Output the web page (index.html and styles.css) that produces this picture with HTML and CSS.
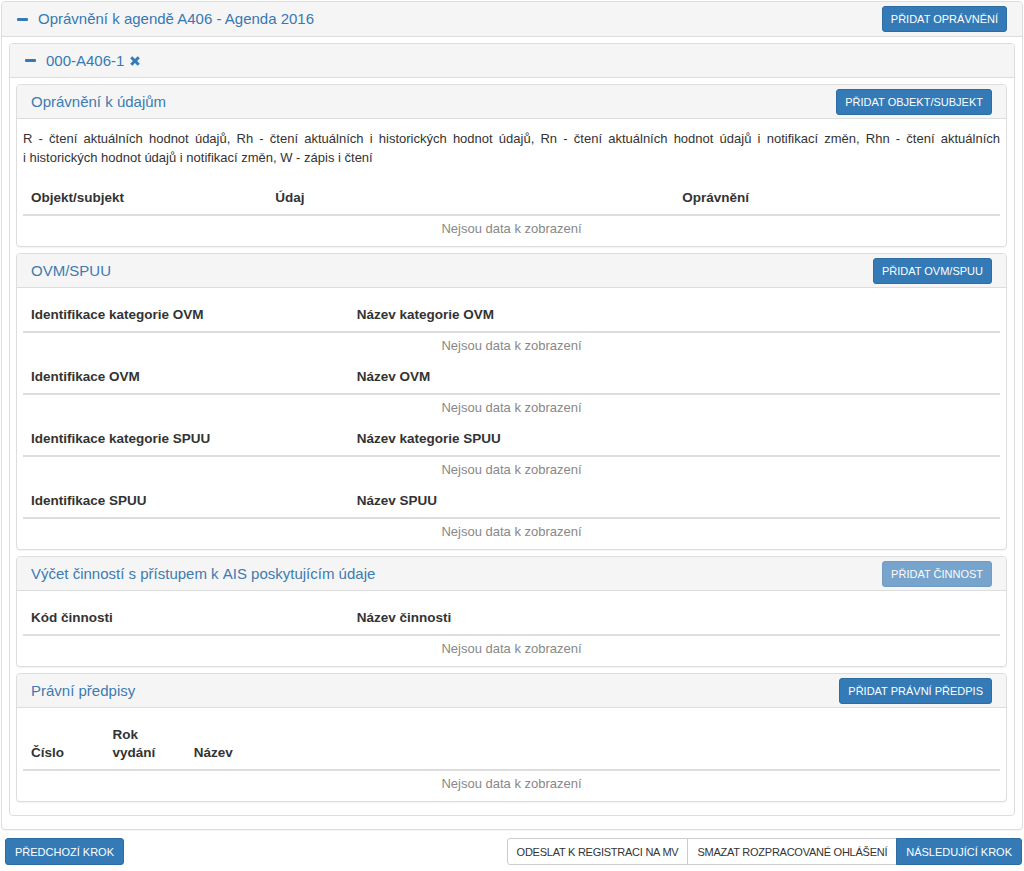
FILE: index.html
```html
<!DOCTYPE html>
<html lang="cs">
<head>
<meta charset="utf-8">
<title>Oprávnění k agendě</title>
<link rel="stylesheet" href="styles.css">
</head>
<body>
<div class="page">
  <section class="panel panel-outer">
    <header class="panel-heading heading-outer">
      <h2 class="panel-title"><span class="ico-minus"></span>Oprávnění k agendě A406 - Agenda 2016</h2>
      <button class="btn btn-primary">Přidat oprávnění</button>
    </header>
    <div class="panel-body body-outer">
      <section class="panel panel-inner">
        <header class="panel-heading heading-inner">
          <h3 class="panel-title"><span class="ico-minus"></span>000-A406-1<svg class="ico-remove" viewBox="0 0 12 12" aria-hidden="true"><path d="M1.2 3.3 L3.3 1.2 L6 3.9 L8.7 1.2 L10.8 3.3 L8.1 6 L10.8 8.7 L8.7 10.8 L6 8.1 L3.3 10.8 L1.2 8.7 L3.9 6 Z"/></svg></h3>
        </header>
        <div class="panel-body body-inner">

          <section class="panel sub">
            <header class="panel-heading heading-sub">
              <h4 class="panel-title sub-title">Oprávnění k&nbsp;údajům</h4>
              <button class="btn btn-primary">Přidat objekt/subjekt</button>
            </header>
            <div class="sub-body">
              <p class="note">R - čtení aktuálních hodnot údajů, Rh - čtení aktuálních i&nbsp;historických hodnot údajů, Rn - čtení aktuálních hodnot údajů i&nbsp;notifikací změn, Rhn - čtení aktuálních i&nbsp;historických hodnot údajů i&nbsp;notifikací změn, W - zápis i&nbsp;čtení</p>
              <table class="grid">
                <thead><tr><th class="w-3">Objekt/subjekt</th><th class="w-5">Údaj</th><th class="w-4">Oprávnění</th></tr></thead>
                <tbody><tr><td class="empty" colspan="3">Nejsou data k zobrazení</td></tr></tbody>
              </table>
            </div>
          </section>

          <section class="panel sub">
            <header class="panel-heading heading-sub">
              <h4 class="panel-title sub-title">OVM/SPUU</h4>
              <button class="btn btn-primary">Přidat OVM/SPUU</button>
            </header>
            <div class="sub-body">
              <table class="grid">
                <thead><tr><th class="w-4">Identifikace kategorie OVM</th><th class="w-8">Název kategorie OVM</th></tr></thead>
                <tbody><tr><td class="empty" colspan="2">Nejsou data k zobrazení</td></tr></tbody>
              </table>
              <table class="grid">
                <thead><tr><th class="w-4">Identifikace OVM</th><th class="w-8">Název OVM</th></tr></thead>
                <tbody><tr><td class="empty" colspan="2">Nejsou data k zobrazení</td></tr></tbody>
              </table>
              <table class="grid">
                <thead><tr><th class="w-4">Identifikace kategorie SPUU</th><th class="w-8">Název kategorie SPUU</th></tr></thead>
                <tbody><tr><td class="empty" colspan="2">Nejsou data k zobrazení</td></tr></tbody>
              </table>
              <table class="grid">
                <thead><tr><th class="w-4">Identifikace SPUU</th><th class="w-8">Název SPUU</th></tr></thead>
                <tbody><tr><td class="empty" colspan="2">Nejsou data k zobrazení</td></tr></tbody>
              </table>
            </div>
          </section>

          <section class="panel sub">
            <header class="panel-heading heading-sub">
              <h4 class="panel-title sub-title">Výčet činností s&nbsp;přístupem k&nbsp;AIS poskytujícím údaje</h4>
              <button class="btn btn-primary" disabled>Přidat činnost</button>
            </header>
            <div class="sub-body">
              <table class="grid">
                <thead><tr><th class="w-4">Kód činnosti</th><th class="w-8">Název činnosti</th></tr></thead>
                <tbody><tr><td class="empty" colspan="2">Nejsou data k zobrazení</td></tr></tbody>
              </table>
            </div>
          </section>

          <section class="panel sub">
            <header class="panel-heading heading-sub">
              <h4 class="panel-title sub-title">Právní předpisy</h4>
              <button class="btn btn-primary">Přidat právní předpis</button>
            </header>
            <div class="sub-body">
              <table class="grid">
                <thead><tr><th class="w-1">Číslo</th><th class="w-1">Rok vydání</th><th class="w-10">Název</th></tr></thead>
                <tbody><tr><td class="empty" colspan="3">Nejsou data k zobrazení</td></tr></tbody>
              </table>
            </div>
          </section>

        </div>
      </section>
    </div>
  </section>

  <footer class="actions">
    <button class="btn btn-primary btn-lg">Předchozí krok</button>
    <div class="btn-group">
      <button class="btn btn-default btn-lg">Odeslat k registraci na MV</button>
      <button class="btn btn-default btn-lg">Smazat rozpracované ohlášení</button>
      <button class="btn btn-primary btn-lg">Následující krok</button>
    </div>
  </footer>
</div>
</body>
</html>
```

FILE: styles.css
```css
* { box-sizing: border-box; }

body {
  margin: 0;
  background: #fff;
  color: #333;
  font-family: "Liberation Sans", Arial, sans-serif;
  font-size: 13px;
  line-height: 19px;
}

.page {
  padding: 1px 1px 0 1px;
}

.panel {
  background: #fff;
  border: 1px solid #ddd;
  border-radius: 4px;
  box-shadow: 0 1px 1px rgba(0, 0, 0, 0.05);
}

.panel-heading {
  display: flex;
  align-items: center;
  justify-content: space-between;
  background: #f5f5f5;
  border-bottom: 1px solid #ddd;
  border-radius: 3px 3px 0 0;
}

.heading-outer {
  min-height: 35px;
  padding: 3px 15px;
}

.heading-inner {
  min-height: 34px;
  padding: 3px 15px;
}

.heading-sub {
  min-height: 34px;
  padding: 3px 14px;
}

.panel-title {
  margin: 0;
  display: flex;
  align-items: center;
  font-size: 15px;
  font-weight: normal;
  line-height: 20px;
  color: #3579b4;
}

.sub-title {
  color: #3d7bb1;
}

.ico-minus {
  display: inline-block;
  width: 11px;
  height: 3px;
  margin-right: 10px;
  background: #337ab7;
  border-radius: 1px;
}

.ico-remove {
  width: 12px;
  height: 12px;
  margin-left: 5px;
  fill: #337ab7;
}

.body-outer {
  padding: 6px 7px 7px;
}

.panel-inner {
  margin-bottom: 6px;
  box-shadow: none;
}

.body-inner {
  padding: 6px 7px 7px 6px;
}

.sub {
  margin-bottom: 6px;
}

.sub + .sub {
  margin-top: 1px;
}

.sub-body {
  padding: 13px 6px 0;
}

.note {
  margin: -3px 0 17px;
  text-align: justify;
  line-height: 19px;
}

.grid {
  width: 100%;
  border-collapse: collapse;
  table-layout: fixed;
}

.grid th {
  padding: 5px 8px 7px;
  font-size: 13.5px;
  font-weight: bold;
  line-height: 18px;
  text-align: left;
  vertical-align: bottom;
  color: #333;
  border-bottom: 2px solid #ddd;
}

.grid td {
  padding: 4px 8px 8px;
  line-height: 18px;
  border-top: 1px solid #e4e4e4;
}

.grid .empty {
  text-align: center;
  color: #888;
}

.w-1 { width: 8.3333%; }
.w-3 { width: 25%; }
.w-4 { width: 33.3333%; }
.w-5 { width: 41.6667%; }
.w-8 { width: 66.6667%; }
.w-10 { width: 83.3333%; }

.btn {
  height: 26px;
  padding: 0 8px;
  font-family: "Liberation Sans", Arial, sans-serif;
  font-size: 11px;
  line-height: 24px;
  text-transform: uppercase;
  white-space: nowrap;
  border: 1px solid transparent;
  border-radius: 3px;
  cursor: pointer;
}

.btn-primary {
  background: #337ab7;
  border-color: #2e6da4;
  color: #fff;
}

.btn-primary:disabled {
  opacity: 0.65;
  cursor: not-allowed;
}

.btn-default {
  background: #fff;
  border-color: #ccc;
  color: #333;
  letter-spacing: -0.25px;
}

.btn-lg {
  height: 27px;
  padding: 0 9px;
}

.actions {
  display: flex;
  justify-content: space-between;
  align-items: center;
  margin-top: 8px;
  padding: 0 1px 0 4px;
}

.btn-group {
  display: flex;
}

.btn-group .btn {
  border-radius: 0;
}

.btn-group .btn + .btn {
  margin-left: -1px;
}

.btn-group .btn:first-child {
  border-radius: 3px 0 0 3px;
}

.btn-group .btn:last-child {
  border-radius: 0 3px 3px 0;
}
```
